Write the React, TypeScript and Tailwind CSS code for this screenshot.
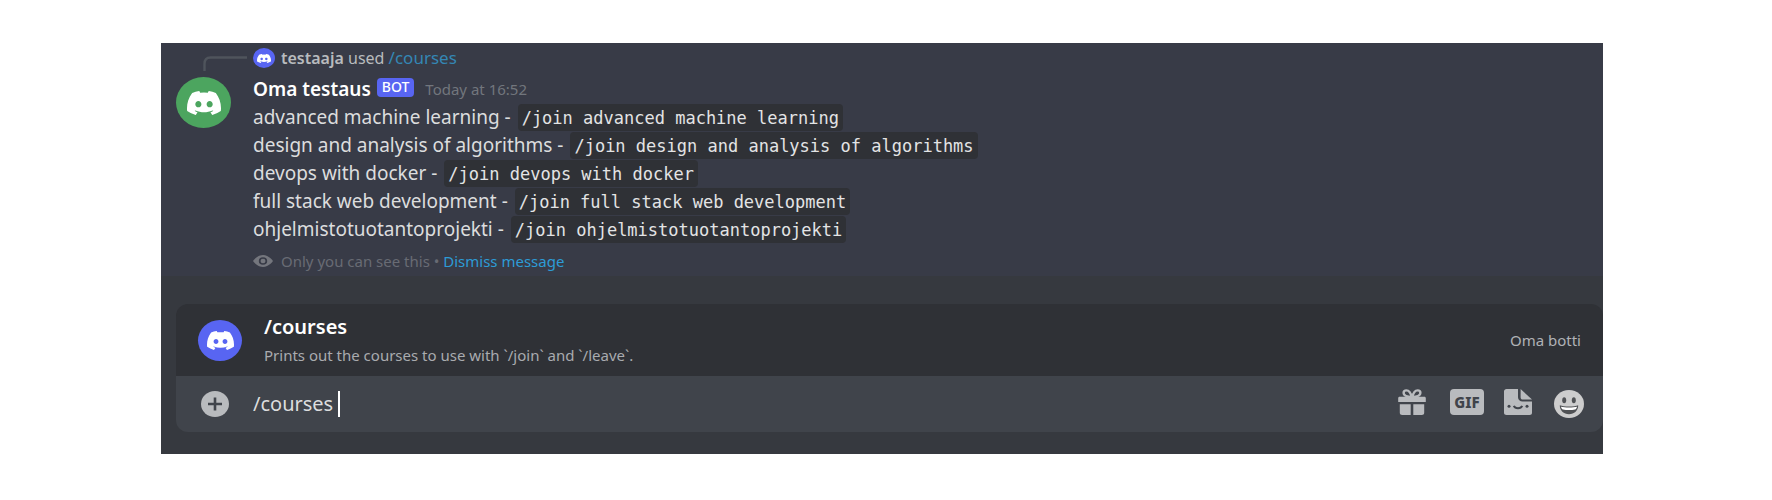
import React, { useState } from "react";

const courses = [
  "advanced machine learning",
  "design and analysis of algorithms",
  "devops with docker",
  "full stack web development",
  "ohjelmistotuotantoprojekti",
];

function DiscordMark({ className }: { className: string }) {
  return (
    <svg viewBox="0 2.85 24 18.3" preserveAspectRatio="none" fill="currentColor" className={className} aria-hidden="true">
      <path d="M20.317 4.37a19.791 19.791 0 0 0-4.885-1.515.074.074 0 0 0-.079.037c-.21.375-.444.864-.608 1.25a18.27 18.27 0 0 0-5.487 0 12.64 12.64 0 0 0-.617-1.25.077.077 0 0 0-.079-.037A19.736 19.736 0 0 0 3.677 4.37a.07.07 0 0 0-.032.027C.533 9.046-.32 13.58.099 18.057a.082.082 0 0 0 .031.057 19.9 19.9 0 0 0 5.993 3.03.078.078 0 0 0 .084-.028 14.09 14.09 0 0 0 1.226-1.994.076.076 0 0 0-.041-.106 13.107 13.107 0 0 1-1.872-.892.077.077 0 0 1-.008-.128 10.2 10.2 0 0 0 .372-.292.074.074 0 0 1 .077-.01c3.928 1.793 8.18 1.793 12.062 0a.074.074 0 0 1 .078.01c.12.098.246.198.373.292a.077.077 0 0 1-.006.127 12.299 12.299 0 0 1-1.873.892.077.077 0 0 0-.041.107c.36.698.772 1.362 1.225 1.993a.076.076 0 0 0 .084.028 19.839 19.839 0 0 0 6.002-3.03.077.077 0 0 0 .032-.054c.5-5.177-.838-9.674-3.549-13.66a.061.061 0 0 0-.031-.03zM8.02 15.33c-1.183 0-2.157-1.085-2.157-2.419 0-1.333.956-2.419 2.157-2.419 1.21 0 2.176 1.096 2.157 2.42 0 1.333-.956 2.418-2.157 2.418zm7.975 0c-1.183 0-2.157-1.085-2.157-2.419 0-1.333.955-2.419 2.157-2.419 1.21 0 2.176 1.096 2.157 2.42 0 1.333-.946 2.418-2.157 2.418z" />
    </svg>
  );
}

function EyeIcon() {
  return (
    <svg viewBox="0 0 20 12" className="h-3 w-5 text-[#74767d]" aria-hidden="true">
      <path fill="currentColor" fillRule="evenodd" d="M10 0C4 0 0 6 0 6s4 6 10 6 10-6 10-6-4-6-10-6Zm0 9.800a4.200 3.800 0 1 1 0-7.600 4.200 3.800 0 0 1 0 7.600Z" />
      <ellipse cx="10" cy="6" rx="2.500" ry="2.200" fill="currentColor" />
    </svg>
  );
}

function PlusIcon() {
  return (
    <svg viewBox="0 0 28 26" className="h-[26px] w-7" aria-hidden="true">
      <ellipse cx="14" cy="13" rx="14" ry="13" fill="#b9bbbe" />
      <path d="M14 6.5v13M7 13h14" stroke="#40444b" strokeWidth="2.6" />
    </svg>
  );
}

function GiftIcon() {
  return (
    <svg viewBox="0 0 28 26" className="h-[26px] w-7" aria-hidden="true">
      <path
        fill="none"
        stroke="currentColor"
        strokeWidth="2.4"
        d="M13.6 8.2C12.8 4 11 1.4 8.4 1.4c-1.8 0-2.8 1.1-2.8 2.5 0 2 1.800 3.600 8 4.300ZM14.400 8.200C15.200 4 17 1.400 19.600 1.400c1.800 0 2.800 1.100 2.800 2.500 0 2-1.800 3.600-8 4.300Z"
      />
      <path fill="currentColor" d="M1.600 7.800h24.800c.8 0 1.400.6 1.400 1.300V13H.2V9.100c0-.7.6-1.300 1.400-1.300ZM1.800 15.300h10.900V26H4.200c-1.400 0-2.400-1-2.400-2.300ZM15.300 15.300h10.900v8.400c0 1.300-1 2.300-2.400 2.300h-8.500Z" />
    </svg>
  );
}

function StickerIcon() {
  return (
    <svg viewBox="0 0 28 26" className="h-[26px] w-7" aria-hidden="true">
      <path fill="currentColor" d="M2.600 0H14v8.200c0 2.500 2 4.300 4.600 4.300H28v11.200c0 1.300-1 2.300-2.400 2.300H2.600C1.100 26 0 25 0 23.700V2.300C0 1 1.100 0 2.600 0Z" />
      <path fill="currentColor" d="M16.600 0 28 10.600h-9.200c-1.300 0-2.200-.9-2.200-2.100Z" />
      <g fill="#40444b">
        <circle cx="5" cy="17.300" r="1.500" />
        <circle cx="23" cy="17.300" r="1.500" />
      </g>
      <path d="M9.800 16.800c1.400 3.200 7 3.200 8.400 0" fill="none" stroke="#40444b" strokeWidth="2" />
    </svg>
  );
}

function SmileIcon() {
  return (
    <svg viewBox="0 0 30 28" className="h-7 w-[30px]" aria-hidden="true">
      <ellipse cx="15" cy="14" rx="15" ry="14" fill="#cdcdcd" />
      <ellipse cx="10.200" cy="10.200" rx="2" ry="3" fill="#505255" />
      <ellipse cx="19.800" cy="10.200" rx="2" ry="3" fill="#505255" />
      <path d="M5.800 15.200c4 1.700 14.400 1.700 18.400 0 .2 5-4 9-9.200 9s-9.400-4-9.200-9Z" fill="#505255" />
      <path d="M7 16.700c4 1.100 12 1.100 16 0-.2 1.700-1 2.400-2 2.700-3.400.8-8.600.8-12 0-1-.3-1.800-1-2-2.700Z" fill="#fff" />
    </svg>
  );
}

export default function App() {
  const [text, setText] = useState("/courses ");

  return (
    <main className="bg-white pb-[46px] pl-[161px] pr-[169px] pt-[43px] font-['Noto_Sans','Open_Sans',sans-serif] text-[#dcddde]">
      <div className="bg-[#36393f]">
        <article className="bg-[#383b47] pb-px pl-[15px] pt-0.5">
          <div className="flex h-[26px] items-center text-base leading-6">
            <div className="flex w-[77px] shrink-0 self-stretch pl-[27px]">
              <svg viewBox="0 0 45 26" className="h-[26px] w-[45px]" aria-hidden="true">
                <path d="M1.500 26V19c0-4 2-6.500 6-6.500H44" fill="none" stroke="#4f545c" strokeWidth="2.400" />
              </svg>
            </div>
            <span className="flex h-5 w-[22px] shrink-0 items-center justify-center rounded-[50%] bg-[#5865f2] text-white">
              <DiscordMark className="h-[9px] w-[14px]" />
            </span>
            <p className="pl-1.5 text-[#b9bbbe]">
              <strong className="font-semibold">testaaja</strong> used{" "}
              <a href="#courses" className="text-[17px] text-[#3487b5]">/courses</a>
            </p>
          </div>

          <div className="flex">
            <div className="w-[77px] shrink-0 pt-1.5">
              <div className="flex h-[51px] w-[55px] items-center justify-center rounded-[50%] bg-[#4ca55f] text-white">
                <DiscordMark className="h-6 w-[34px]" />
              </div>
            </div>
            <div className="min-w-0 pt-1">
              <header className="flex h-7 items-center">
                <h2 className="text-[19px] font-semibold leading-7 text-white">Oma testaus</h2>
                <span className="mb-1 ml-1.5 flex h-[19px] items-center rounded bg-[#5865f2] px-[5px] text-sm font-medium leading-4 text-white">BOT</span>
                <time className="ml-[11px] text-[15px] leading-7 text-[#72767d]">Today at 16:52</time>
              </header>
              <ul className="text-[19px] leading-7">
                {courses.map((course) => (
                  <li key={course} className="flex items-center whitespace-pre">
                    <span>{course} - </span>
                    <code className="ml-0.5 rounded bg-[#2f3136] px-1 pt-0.5 font-['DejaVu_Sans_Mono',monospace] text-[17px] leading-[25px] text-[#e3e4e5]">/join {course}</code>
                  </li>
                ))}
              </ul>
              <footer className="flex h-8 items-center pt-1 text-[15px] leading-6 text-[#686b74]">
                <EyeIcon />
                <span className="whitespace-pre pl-2">Only you can see this • </span>
                <button type="button" className="text-[#2d9bd6]">Dismiss message</button>
              </footer>
            </div>
          </div>
        </article>

        <section className="pb-[22px] pl-[15px] pt-7">
          <div className="flex h-[72px] items-center rounded-t-xl bg-[#2f3136] px-[22px]">
            <span className="flex h-[41px] w-11 shrink-0 items-center justify-center rounded-[50%] bg-[#5865f2] text-white">
              <DiscordMark className="h-[19px] w-[27px]" />
            </span>
            <div className="flex-1 pl-[22px] pt-0.5">
              <h3 className="text-[20px] font-semibold leading-7 text-white">/courses</h3>
              <p className="text-[15px] leading-7 text-[#a9abaf]">Prints out the courses to use with `/join` and `/leave`.</p>
            </div>
            <span className="text-[15px] leading-6 text-[#b0b2b6]">Oma botti</span>
          </div>
          <form className="flex h-14 items-center rounded-b-xl bg-[#40444b] pl-[25px] pr-[19px] text-[#b9bbbe]" onSubmit={(e) => e.preventDefault()}>
            <button type="button" aria-label="Add attachment">
              <PlusIcon />
            </button>
            <label className="flex flex-1 items-center pl-6">
              <input
                aria-label="Message"
                value={text}
                onChange={(e) => setText(e.target.value)}
                className="field-sizing-content whitespace-pre bg-transparent text-[20px] leading-7 text-[#dcddde] outline-none"
              />
              <span className="h-[26px] w-0.5 bg-white" />
            </label>
            <div className="flex items-center">
              <button type="button" aria-label="Send a gift" className="mb-1 mr-6">
                <GiftIcon />
              </button>
              <button type="button" aria-label="GIF" className="mb-1 mr-5 flex h-[26px] w-[34px] items-center justify-center rounded bg-[#b9bbbe] text-[15px] font-extrabold leading-6 text-[#40444b]">
                GIF
              </button>
              <button type="button" aria-label="Stickers" className="mb-1 mr-[22px]">
                <StickerIcon />
              </button>
              <button type="button" aria-label="Emoji">
                <SmileIcon />
              </button>
            </div>
          </form>
        </section>
      </div>
    </main>
  );
}
